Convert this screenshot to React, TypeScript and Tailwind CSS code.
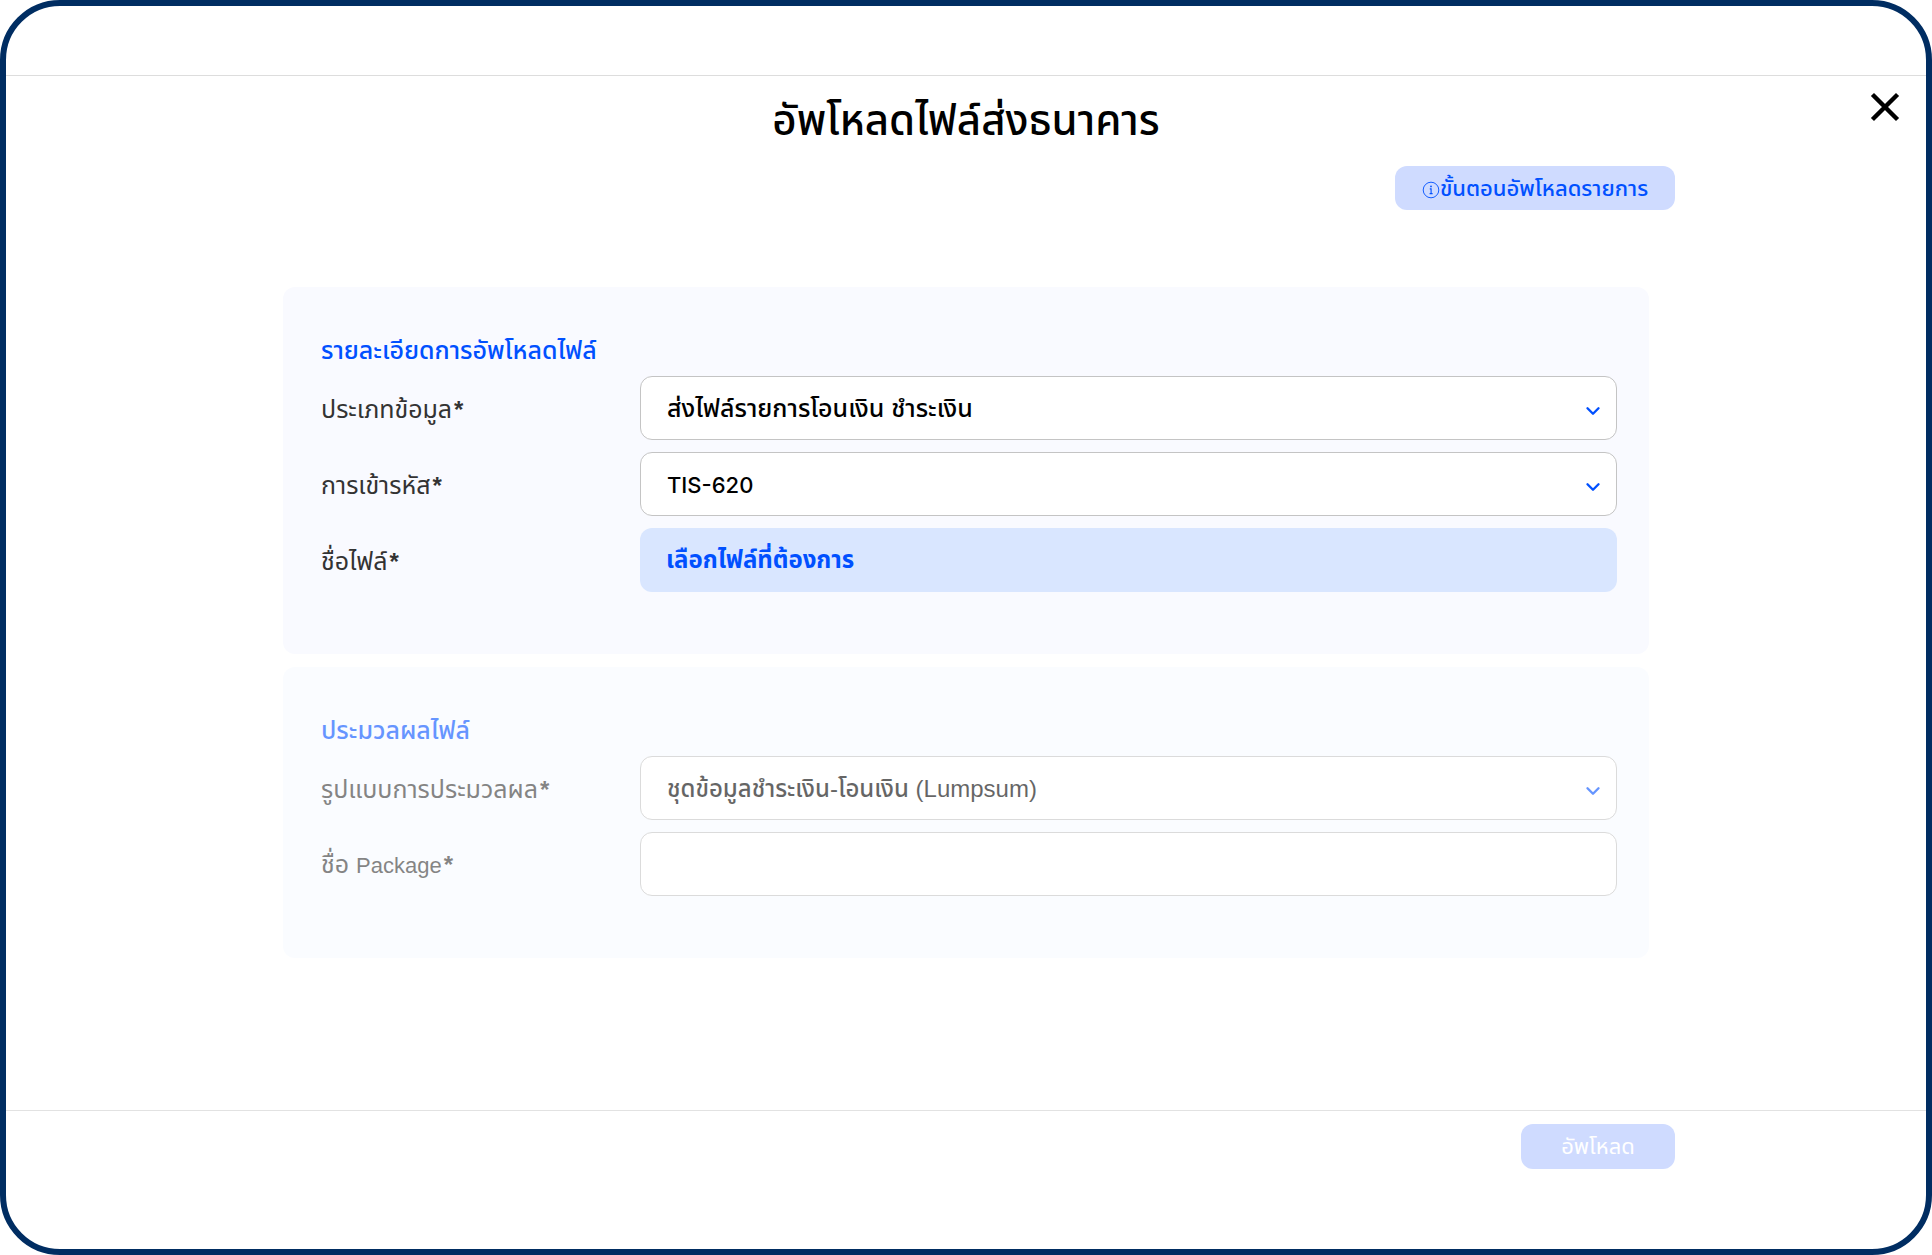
import React, { useState } from 'react';
import { ChevronDown } from 'lucide-react';

interface FieldRowProps {
  id: string;
  label: React.ReactNode;
  children: React.ReactNode;
}

const FieldRow: React.FC<FieldRowProps> = ({ id, label, children }) => (
  <div className="flex items-center">
    <label htmlFor={id} className="w-[319px] shrink-0 pt-0.5 text-[25px] leading-8 text-[#333333]">
      {label}
      <span className="ml-0.5 font-['Liberation_Sans'] text-2xl font-bold">*</span>
    </label>
    <div className="relative min-w-0 flex-1">{children}</div>
  </div>
);

interface SelectFieldProps {
  id: string;
  label: string;
  options: string[];
  textClass?: string;
  disabled?: boolean;
}

const SelectField: React.FC<SelectFieldProps> = ({
  id,
  label,
  options,
  textClass = 'text-[25px] font-medium',
  disabled,
}) => (
  <FieldRow id={id} label={label}>
    <select
      id={id}
      disabled={disabled}
      className={`block h-16 w-full appearance-none rounded-xl border border-[#c4c4c4] bg-white pt-0.5 pl-[26px] pr-12 text-black opacity-100 ${textClass}`}
    >
      {options.map((option) => (
        <option key={option}>{option}</option>
      ))}
    </select>
    <ChevronDown
      className="pointer-events-none absolute right-[13px] top-1/2 mt-[3px] h-[22px] w-[22px] -translate-y-1/2 text-[#0050ff]"
      strokeWidth={2.6}
    />
  </FieldRow>
);

const InfoIcon = () => (
  <svg viewBox="0 0 18 18" className="mt-1 h-[18px] w-[18px] shrink-0" fill="none" stroke="currentColor">
    <circle cx="9" cy="9" r="7.8" strokeWidth="0.9" />
    <circle cx="9" cy="5.4" r="0.9" fill="currentColor" stroke="none" />
    <path d="M7.8 7.9h1.3v4.6M7.6 12.6h3" strokeWidth="1.1" />
  </svg>
);

export default function App() {
  const [packageName, setPackageName] = useState('');

  return (
    <div className="flex min-h-screen flex-col rounded-[60px] border-[6px] border-[#002d62] bg-white font-['Liberation_Sans','Noto_Sans_Thai',sans-serif]">
      <div className="h-[70px] border-b border-[#dddddd]" />

      {/* Dialog header */}
      <header className="relative flex h-[90px] justify-center pt-[15px]">
        <h1 className="text-[42px] leading-[60px] font-medium text-black">อัพโหลดไฟล์ส่งธนาคาร</h1>
        <button type="button" aria-label="ปิด" className="absolute right-[26px] top-4 text-black">
          <svg viewBox="0 0 30 30" className="h-[30px] w-[30px]" stroke="currentColor" strokeWidth="4.4" strokeLinecap="square">
            <path d="M4 4L26 26M26 4L4 26" />
          </svg>
        </button>
      </header>

      <main className="mx-auto flex w-full max-w-[1418px] flex-1 flex-col">
        <button
          type="button"
          className="flex h-11 w-[280px] items-center justify-center self-end rounded-xl bg-[#cfdbff] text-[22px] font-medium text-[#0050ff]"
        >
          <InfoIcon />
          ขั้นตอนอัพโหลดรายการ
        </button>

        <form className="mx-[26px] mt-[77px] flex flex-col gap-[13px]">
          {/* Upload details */}
          <section className="rounded-xl bg-[#f9faff] pl-[38px] pr-8 pt-[47px] pb-[62px]">
            <h2 className="pb-2.5 text-[25px] leading-8 font-medium text-[#0050ff]">รายละเอียดการอัพโหลดไฟล์</h2>
            <div className="flex flex-col gap-3">
              <SelectField id="data-type" label="ประเภทข้อมูล" options={['ส่งไฟล์รายการโอนเงิน ชำระเงิน']} />
              <SelectField
                id="encoding"
                label="การเข้ารหัส"
                options={['TIS-620']}
                textClass="font-['Inter'] text-[22px] font-medium"
              />
              <FieldRow id="file-name" label="ชื่อไฟล์">
                <button
                  id="file-name"
                  type="button"
                  className="block h-16 w-full rounded-xl bg-[#d9e6ff] pl-[26px] text-left text-2xl font-bold text-[#0050ff]"
                >
                  เลือกไฟล์ที่ต้องการ
                </button>
              </FieldRow>
            </div>
          </section>

          <section className="rounded-xl bg-[#f8fbff] pl-[38px] pr-8 pt-[47px] pb-[62px] opacity-60">
            <h2 className="pb-2.5 text-[25px] leading-8 font-medium text-[#0050ff]">ประมวลผลไฟล์</h2>
            <div className="flex flex-col gap-3">
              <SelectField
                id="process-type"
                label="รูปแบบการประมวลผล"
                options={['ชุดข้อมูลชำระเงิน-โอนเงิน (Lumpsum)']}
                textClass="text-2xl font-medium"
                disabled
              />
              <FieldRow
                id="package-name"
                label={
                  <>
                    ชื่อ <span className="text-[22px]">Package</span>
                  </>
                }
              >
                <input
                  id="package-name"
                  type="text"
                  disabled
                  value={packageName}
                  onChange={(e) => setPackageName(e.target.value)}
                  className="block h-16 w-full rounded-xl border border-[#c4c4c4] bg-white px-[26px] text-2xl"
                />
              </FieldRow>
            </div>
          </section>
        </form>
      </main>

      <footer className="h-[139px] border-t border-[#e2e2e2] pt-[13px]">
        <div className="mx-auto flex w-full max-w-[1418px] justify-end">
          <button type="button" disabled className="h-[45px] w-[154px] rounded-xl bg-[#cfdbff] text-[22px] text-white">
            อัพโหลด
          </button>
        </div>
      </footer>
    </div>
  );
}
